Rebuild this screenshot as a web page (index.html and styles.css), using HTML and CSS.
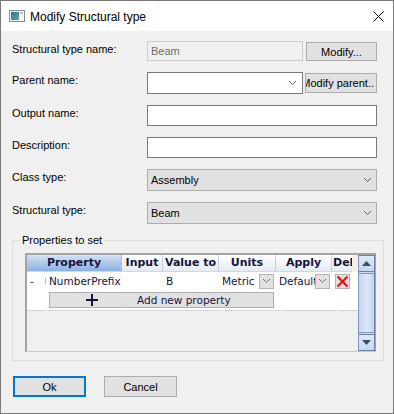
FILE: index.html
```html
<!DOCTYPE html>
<html lang="en">

<head>
    <meta charset="UTF-8">
    <title>Modify Structural type</title>
    <link rel="stylesheet" href="styles.css">
</head>

<body>

    <div class="window">

        <!-- Title bar -->
        <div class="titlebar">
            <svg class="app-icon" viewBox="0 0 16 12">
                <defs>
                    <linearGradient id="ico" x1="0" y1="0" x2="1" y2="1">
                        <stop offset="0" stop-color="#2f6fb5" />
                        <stop offset="1" stop-color="#5fae6a" />
                    </linearGradient>
                </defs>
                <rect x="0.5" y="0.5" width="15" height="11" fill="#f6f6f6" stroke="#8c8c8c" />
                <rect x="2" y="2" width="8" height="8" fill="url(#ico)" />
                <rect x="11" y="2" width="3" height="2" fill="#b8c4cc" />
            </svg>
            <span class="title">Modify Structural type</span>
            <svg class="close" viewBox="0 0 11 11">
                <path d="M0.5 0.5 L10.5 10.5 M10.5 0.5 L0.5 10.5" stroke="#000" stroke-width="1" />
            </svg>
        </div>

        <div class="content">

            <!-- Main fields -->
            <div class="form">
                <label class="lbl">Structural type name:</label>
                <div class="field gap3">
                    <div class="text-input short disabled">Beam</div>
                    <button type="button" class="btn btn-small">Modify...</button>
                </div>

                <label class="lbl">Parent name:</label>
                <div class="field gap2">
                    <div class="text-input short combo">
                        <span></span>
                        <svg class="chevron" viewBox="0 0 7 4"><path d="M0 0 L3.5 3.5 L7 0" /></svg>
                    </div>
                    <button type="button" class="btn btn-small btn-clip"><span>Modify parent..</span></button>
                </div>

                <label class="lbl">Output name:</label>
                <div class="field">
                    <div class="text-input"></div>
                </div>

                <label class="lbl">Description:</label>
                <div class="field">
                    <div class="text-input"></div>
                </div>

                <label class="lbl">Class type:</label>
                <div class="field">
                    <div class="select">
                        <span>Assembly</span>
                        <svg class="chevron" viewBox="0 0 7 4"><path d="M0 0 L3.5 3.5 L7 0" /></svg>
                    </div>
                </div>

                <label class="lbl">Structural type:</label>
                <div class="field">
                    <div class="select">
                        <span>Beam</span>
                        <svg class="chevron" viewBox="0 0 7 4"><path d="M0 0 L3.5 3.5 L7 0" /></svg>
                    </div>
                </div>
            </div>

            <!-- Properties grid -->
            <fieldset class="props">
                <legend>Properties to set</legend>

                <div class="grid">
                    <div class="grid-body">
                        <div class="grid-head cols">
                            <div class="hcell hcell-sel">Property</div>
                            <div class="hcell">Input</div>
                            <div class="hcell">Value to</div>
                            <div class="hcell">Units</div>
                            <div class="hcell">Apply</div>
                            <div class="hcell hcell-clip">Del</div>
                        </div>

                        <div class="grid-row cols">
                            <div class="cell rowhead">-<span class="mark"></span></div>
                            <div class="cell">NumberPrefix</div>
                            <div class="cell"></div>
                            <div class="cell">B</div>
                            <div class="cell cell-drop">
                                <span>Metric</span>
                                <span class="drop-btn"><svg viewBox="0 0 7 4"><path d="M0 0 L3.5 3.5 L7 0" /></svg></span>
                            </div>
                            <div class="cell cell-drop">
                                <span class="clip">Default</span>
                                <span class="drop-btn"><svg viewBox="0 0 7 4"><path d="M0 0 L3.5 3.5 L7 0" /></svg></span>
                            </div>
                            <div class="cell cell-del">
                                <span class="del-btn">
                                    <svg viewBox="0 0 13 13"><path d="M1.5 1.5 L11.5 11.5 M11.5 1.5 L1.5 11.5" /></svg>
                                </span>
                            </div>
                        </div>

                        <div class="grid-add cols">
                            <button type="button" class="add-btn">
                                <svg class="plus" viewBox="0 0 12 12"><path d="M6 0 V12 M0 6 H12" /></svg>
                                <span>Add new property</span>
                            </button>
                        </div>

                        <div class="grid-line cols">
                            <div></div><div></div><div></div><div></div><div></div><div></div><div></div>
                        </div>
                    </div>

                    <div class="vscroll">
                        <div class="sb-btn"><svg viewBox="0 0 9 5"><path d="M0 5 L4.5 0 L9 5 Z" /></svg></div>
                        <div class="sb-thumb"></div>
                        <div class="sb-btn sb-down"><svg viewBox="0 0 9 5"><path d="M0 0 L4.5 5 L9 0 Z" /></svg></div>
                    </div>
                </div>
            </fieldset>

            <!-- Dialog buttons -->
            <div class="actions">
                <button type="button" class="btn btn-dlg btn-default">Ok</button>
                <button type="button" class="btn btn-dlg">Cancel</button>
            </div>

        </div>
    </div>

</body>

</html>
```

FILE: styles.css
```css
* {
    box-sizing: border-box;
}

body {
    margin: 0;
    font-family: "Liberation Sans", Arial, sans-serif;
    font-size: 11px;
    color: #000;
    background: #fff;
}

.window {
    width: 394px;
    height: 414px;
    border: 1px solid #7a7a7a;
    background: #f0f0f0;
}

/* Title bar */
.titlebar {
    height: 30px;
    background: #fff;
    display: flex;
    align-items: center;
    padding: 0 9px 0 8px;
}

.app-icon {
    width: 16px;
    height: 12px;
    margin-right: 5px;
}

.title {
    flex: 1;
    font-size: 12px;
    padding-top: 1px;
}

.close {
    width: 11px;
    height: 11px;
}

.content {
    padding: 10px 16px 0 11px;
}

/* Form */
.form {
    display: grid;
    grid-template-columns: 135px 230px;
    grid-template-rows: 20px 22px 21px 21px 22px 22px;
    row-gap: 11px;
}

.lbl {
    padding-top: 2px;
    line-height: 13px;
}

.field {
    display: flex;
    align-items: center;
}

.gap3 {
    gap: 3px;
}

.gap2 {
    gap: 2px;
}

.text-input {
    flex: 1;
    height: 100%;
    border: 1px solid #7a7a7a;
    background: #fff;
    padding: 0 3px;
    display: flex;
    align-items: center;
}

.text-input.short {
    flex: none;
    width: 156px;
}

.text-input.disabled {
    background: #f0f0f0;
    border-color: #cccccc;
    color: #6d6d6d;
}

.combo {
    justify-content: space-between;
    padding-right: 6px;
}

.chevron {
    width: 7px;
    height: 4px;
    fill: none;
    stroke: #606060;
    stroke-width: 1;
}

.select {
    flex: 1;
    height: 100%;
    border: 1px solid #adadad;
    background: #e1e1e1;
    padding: 0 5px 0 3px;
    display: flex;
    align-items: center;
    justify-content: space-between;
}

.btn {
    font-family: "Liberation Sans", Arial, sans-serif;
    font-size: 11px;
    color: #000;
    background: #e1e1e1;
    border: 1px solid #adadad;
    padding: 0;
}

.btn-small {
    flex: 1;
    height: 19px;
    align-self: flex-end;
}

.gap2 .btn-small {
    height: 20px;
    align-self: center;
}

.btn-clip {
    display: flex;
    justify-content: flex-end;
    align-items: center;
    overflow: hidden;
    white-space: nowrap;
    padding-right: 2px;
}

/* Properties group */
.props {
    margin: 10px -1px 0 0;
    padding: 6px 7px 8px 12px;
    border: 1px solid #dcdcdc;
}

.props legend {
    padding: 0 2px;
    margin-left: -5px;
    line-height: 13px;
}

.grid {
    height: 99px;
    display: flex;
    border-top: 2px solid #a3a3a3;
    border-left: 2px solid #a3a3a3;
    border-right: 1px solid #a3a3a3;
    border-bottom: 1px solid #c8c8c8;
    background: #f0f0f0;
    font-family: "DejaVu Sans", Verdana, sans-serif;
    font-size: 10.5px;
    color: #14143c;
}

.grid-body {
    flex: 1;
    overflow: hidden;
}

.cols {
    display: grid;
    grid-template-columns: 19px 76px 41px 56px 57px 56px 20px;
}

.grid-head {
    height: 17px;
}

.hcell {
    font-weight: bold;
    font-size: 11px;
    text-align: center;
    line-height: 16px;
    white-space: nowrap;
    overflow: hidden;
    background: linear-gradient(#ffffff, #e4eaf3);
    border-right: 1px solid #c5cfdc;
    border-bottom: 1px solid #d0d8e4;
}

.hcell-sel {
    grid-column: span 2;
    background: linear-gradient(#d2e2f6, #8db1e2);
    border-right-color: #a9bdd8;
}

.hcell-clip {
    text-align: left;
    padding-left: 1px;
    border-right: none;
}

.grid-row {
    height: 18px;
    background: #fff;
}

.cell {
    display: flex;
    align-items: center;
    padding-left: 3px;
    white-space: nowrap;
    overflow: hidden;
}

.rowhead {
    justify-content: space-between;
    padding-right: 0;
}

.mark {
    width: 1px;
    height: 6px;
    background: #f0b070;
}

.cell-drop {
    justify-content: space-between;
    padding-right: 2px;
}

.clip {
    overflow: hidden;
    flex: 1;
}

.drop-btn {
    flex: none;
    width: 15px;
    height: 15px;
    border: 1px solid #b4b4b4;
    background: #e1e1e1;
    display: flex;
    align-items: center;
    justify-content: center;
}

.drop-btn svg {
    width: 7px;
    height: 4px;
    fill: none;
    stroke: #707070;
}

.cell-del {
    padding-left: 3px;
}

.del-btn {
    width: 15px;
    height: 15px;
    border: 1px solid #b4b4b4;
    background: #e1e1e1;
    display: flex;
    align-items: center;
    justify-content: center;
}

.del-btn svg {
    width: 13px;
    height: 13px;
    fill: none;
    stroke: #e01010;
    stroke-width: 2;
}

.grid-add {
    height: 20px;
    background: #fff;
    align-items: center;
}

.add-btn {
    grid-column: 2 / 6;
    margin: 0 2px 0 3px;
    height: 16px;
    border: 1px solid #b0b0b0;
    background: #e1e1e1;
    display: flex;
    align-items: center;
    padding: 0 0 0 36px;
    font-family: "DejaVu Sans", Verdana, sans-serif;
    font-size: 10.5px;
    color: #14143c;
}

.plus {
    width: 12px;
    height: 12px;
    fill: none;
    stroke: #14143c;
    stroke-width: 2;
    margin-right: 39px;
}

.grid-line {
    height: 1px;
    column-gap: 1px;
    background: #fff;
}

.grid-line div {
    background: #d4d4d4;
}

/* Vertical scrollbar */
.vscroll {
    width: 17px;
    display: flex;
    flex-direction: column;
    background: #c9d9f0;
    border: 1px solid #6c7fa6;
    border-left-color: #8898bb;
}

.sb-btn {
    height: 16px;
    display: flex;
    align-items: center;
    justify-content: center;
    border-bottom: 1px solid #6c7fa6;
    background: linear-gradient(#dde8f8, #c6d7ef);
}

.sb-down {
    border-bottom: none;
    border-top: 1px solid #6c7fa6;
}

.sb-btn svg {
    width: 9px;
    height: 5px;
    fill: #3c4a66;
}

.sb-thumb {
    flex: 1;
    margin: 1px 0;
    background: linear-gradient(to right, #c3d4ed, #dce8f8 50%, #c3d4ed);
    border-top: 1px solid #8898bb;
    border-bottom: 1px solid #8898bb;
}

/* Dialog buttons */
.actions {
    display: flex;
    gap: 18px;
    margin-top: 15px;
    padding-left: 1px;
}

.btn-dlg {
    width: 73px;
    height: 21px;
}

.btn-default {
    border: 2px solid #0078d7;
}
```
